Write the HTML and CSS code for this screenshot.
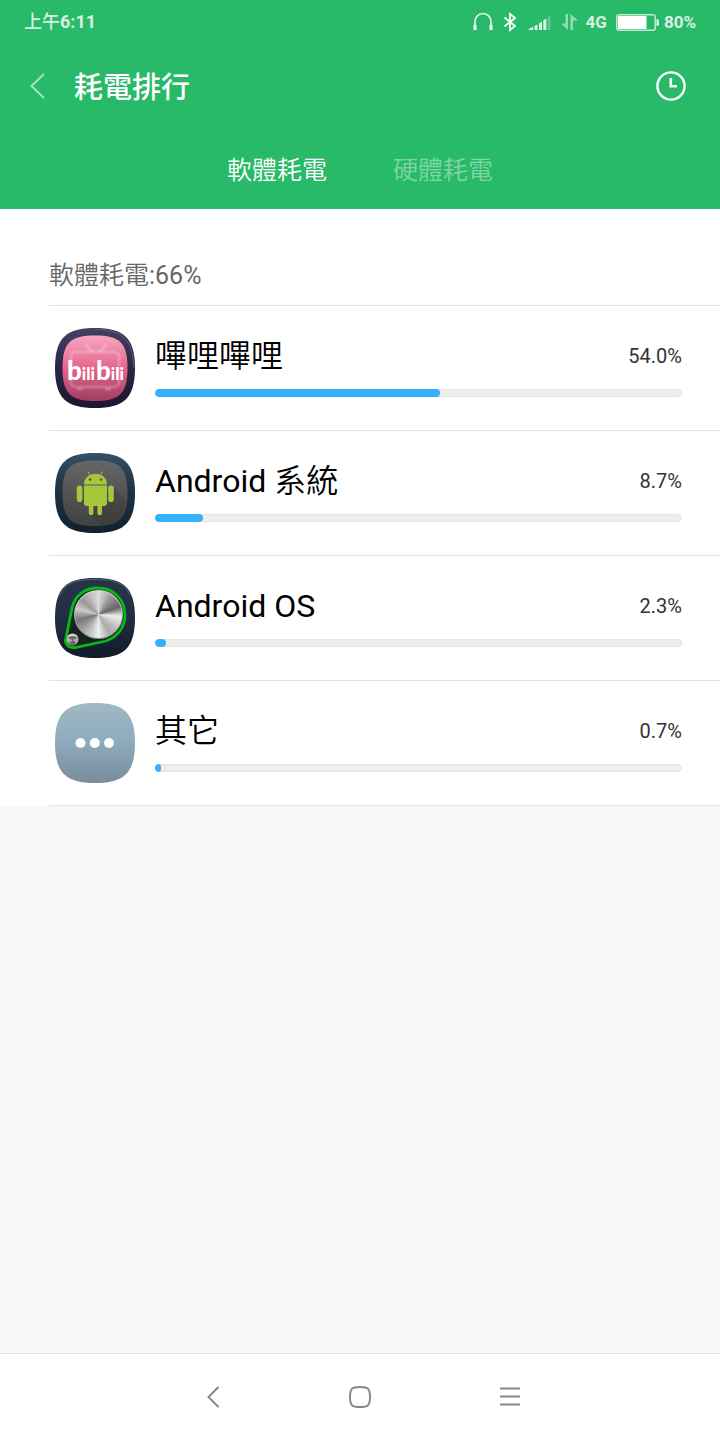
FILE: index.html
```html
<!DOCTYPE html>
<html lang="zh-Hant">
<head>
<meta charset="utf-8">
<meta name="viewport" content="width=device-width, initial-scale=1">
<title>耗電排行</title>
<link rel="stylesheet" href="styles.css">
</head>
<body>
<div class="screen">
  <header class="top">
    <div class="status">
      <span class="status-time"><span class="meridiem">上午</span>6:11</span>
      <div class="status-icons">
        <svg width="20" height="20" viewBox="0 0 20 20" fill="none" stroke="#fff" stroke-width="1.6" opacity=".9"><path d="M2 15V9.500a8 8 0 0 1 16 0V15"/><path d="M2 13v5M18 13v5" stroke-width="3.200"/></svg>
        <svg class="bluetooth" width="14" height="20" viewBox="0 0 14 20" fill="none" stroke="#fff" stroke-width="1.900" opacity=".95"><path d="M1.500 5.500 12 14l-5 4V2l5 4L1.500 14.500"/></svg>
        <svg class="signal" width="23" height="16" viewBox="0 0 23 16" fill="#fff"><g opacity=".85"><path d="M0 16 5 12.500V16zM6.500 12 9.500 10.500V16h-3zM11 9.500 14 7.500V16h-3zM15.300 6.500 18.300 4.500V16h-3z"/></g><path d="M19.500 3 22.500 1V16h-3z" opacity=".25"/></svg>
        <svg class="data" width="17" height="16" viewBox="0 0 17 16" fill="#fff" opacity=".5"><path d="M4.500 0h2.500v16L0 9.500h4.500zM12 16H9.500V0L17 6.500h-5z"/></svg>
        <span class="network">4G</span>
        <svg class="battery" width="43" height="17" viewBox="0 0 43 17"><rect x=".8" y=".8" width="38.400" height="15.400" rx="2" fill="none" stroke="#fff" stroke-width="1.500" opacity=".7"/><path d="M2 2h28.500v13H2z" fill="#fff"/><path d="M40.500 5h1l1.500 1.500v4L41.500 12h-1z" fill="#fff" opacity=".85"/></svg>
        <span>80%</span>
      </div>
    </div>
    <div class="title-bar">
      <button class="icon-button" aria-label="返回"><svg width="16" height="26" viewBox="0 0 16 26" fill="none" stroke="#fff" stroke-width="1.900" opacity=".6"><path d="M14 1 1.500 13 14 25"/></svg></button>
      <h1>耗電排行</h1>
      <button class="icon-button" aria-label="歷史記錄"><svg width="30" height="30" viewBox="0 0 30 30" fill="none" stroke="#fff" stroke-width="2.400"><circle cx="15" cy="15" r="13.600"/><path d="M14.800 7v8.300H21" stroke-width="2.600"/></svg></button>
    </div>
    <nav class="tabs">
      <button class="tab tab-active">軟體耗電</button>
      <button class="tab">硬體耗電</button>
    </nav>
  </header>

  <main class="content">
    <section class="panel">
      <h2><span class="cjk">軟體耗電</span>:66%</h2>
      <ul class="apps">
        <li class="app">
          <svg class="app-icon" viewBox="0 0 80 80" aria-hidden="true">
            <defs>
              <linearGradient id="frameA" x2="0" y2="1"><stop stop-color="#464160"/><stop offset=".5" stop-color="#2a2645"/><stop offset="1" stop-color="#1b1730"/></linearGradient>
              <linearGradient id="pink" x2="0" y2="1"><stop stop-color="#f8a6c0"/><stop offset=".5" stop-color="#e4668d"/><stop offset="1" stop-color="#a13c60"/></linearGradient>
            </defs>
            <path d="M40 0C68 0 80 9 80 40S68 80 40 80 0 71 0 40 12 0 40 0Z" fill="url(#frameA)"/>
            <path d="M40 1.500C66 1.500 78.500 11 78.500 40" fill="none" stroke="#5b5574" stroke-width="1"/>
            <path d="M40 7.500C64 7.500 72.500 14 72.500 40S64 73 40 73 7.500 66 7.500 40 16 7.500 40 7.500Z" fill="url(#pink)"/>
            <g fill="none" stroke="#fff" stroke-opacity=".18" stroke-width="3.500"><rect x="16" y="24" width="48" height="35" rx="5"/><path d="m30 16 8 8M52 16l-8 8M22 61h6M50 61h6"/></g>
            <g class="logo-text"><text x="12" y="52"><tspan class="logo-big">b</tspan><tspan class="logo-small">ili</tspan></text><text x="41" y="52"><tspan class="logo-big">b</tspan><tspan class="logo-small">ili</tspan></text></g>
          </svg>
          <div class="usage">
            <div class="usage-line"><label class="app-name cjk" for="use-bili">嗶哩嗶哩</label><span class="percent">54.0%</span></div>
            <progress id="use-bili" max="100" value="54"></progress>
          </div>
        </li>
        <li class="app">
          <svg class="app-icon" viewBox="0 0 80 80" aria-hidden="true">
            <defs>
              <linearGradient id="frameB" x2="0" y2="1"><stop stop-color="#365065"/><stop offset=".4" stop-color="#203647"/><stop offset="1" stop-color="#12202c"/></linearGradient>
              <linearGradient id="gray" x2="0" y2="1"><stop stop-color="#666"/><stop offset="1" stop-color="#414141"/></linearGradient>
            </defs>
            <path d="M40 0C68 0 80 9 80 40S68 80 40 80 0 71 0 40 12 0 40 0Z" fill="url(#frameB)"/>
            <path d="M40 7.500C64 7.500 72.500 14 72.500 40S64 73 40 73 7.500 66 7.500 40 16 7.500 40 7.500Z" fill="url(#gray)"/>
            <path d="M58 34 71 47C70 66 61 72 45 72L34 61Z" fill="#333" opacity=".3"/>
            <g fill="#a4c83a"><path d="M29 31.500C29 17 52 17 52 31.500ZM29 32.500H52V50a3 3 0 0 1-3 3h-2v7a2.300 2.300 0 0 1-4.600 0v-7h-4v7a2.300 2.300 0 0 1-4.600 0v-7H32a3 3 0 0 1-3-3Z"/><rect x="21.800" y="32.500" width="5.600" height="16.500" rx="2.800"/><rect x="53.200" y="32.500" width="5.600" height="16.500" rx="2.800"/><path d="m35.500 23-2.500-4.500M45 23l2.500-4.500" stroke="#a4c83a" stroke-width="1"/></g>
            <g fill="#525b2d"><circle cx="35" cy="26.500" r="1.300"/><circle cx="46" cy="26.500" r="1.300"/></g>
          </svg>
          <div class="usage">
            <div class="usage-line"><label class="app-name" for="use-system">Android <span class="cjk">系統</span></label><span class="percent">8.7%</span></div>
            <progress id="use-system" max="100" value="9.1"></progress>
          </div>
        </li>
        <li class="app">
          <svg class="app-icon" viewBox="0 0 80 80" aria-hidden="true">
            <defs>
              <linearGradient id="frameC" x2="0" y2="1"><stop stop-color="#263548"/><stop offset=".5" stop-color="#202f42"/><stop offset="1" stop-color="#111b29"/></linearGradient>
              <linearGradient id="rim" x2="0" y2="1"><stop stop-color="#ddd"/><stop offset="1" stop-color="#8c8c8c"/></linearGradient>
            </defs>
            <path d="M40 0C68 0 80 9 80 40S68 80 40 80 0 71 0 40 12 0 40 0Z" fill="url(#frameC)"/>
            <path d="M5 18C10 5 20 1.500 40 1.500S70 5 75 18" fill="none" stroke="#52606f" stroke-width="1"/>
            <path d="M17 30C20 17 30 10 43 10C59 10 70 22 70 37C70 50 62 59 51 63L20 69.500C13 70 9 65 11 60Z" fill="#14251f" stroke="#08b719" stroke-width="2.800"/>
            <circle cx="43.500" cy="36.500" r="24.500" fill="url(#rim)"/>
            <foreignObject x="20" y="13" width="47" height="47"><div xmlns="http://www.w3.org/1999/xhtml" class="dial"></div></foreignObject>
            <circle cx="17.500" cy="61.500" r="6" fill="url(#rim)"/><path d="M12.500 60q5-4 10 0l-5 2zM14 65q4 3 7 0l-3-3z" fill="#555" opacity=".8"/>
          </svg>
          <div class="usage">
            <div class="usage-line"><label class="app-name" for="use-os">Android OS</label><span class="percent">2.3%</span></div>
            <progress id="use-os" max="100" value="2.1"></progress>
          </div>
        </li>
        <li class="app">
          <svg class="app-icon" viewBox="0 0 80 80" aria-hidden="true">
            <defs><linearGradient id="blue" x2="0" y2="1"><stop stop-color="#a2b9c5"/><stop offset=".5" stop-color="#8daabd"/><stop offset="1" stop-color="#788d99"/></linearGradient></defs>
            <path d="M40 0C68 0 80 9 80 40S68 80 40 80 0 71 0 40 12 0 40 0Z" fill="url(#blue)"/>
            <g fill="#fff"><circle cx="25.500" cy="40" r="5"/><circle cx="39.800" cy="40" r="5"/><circle cx="54" cy="40" r="5"/></g>
          </svg>
          <div class="usage">
            <div class="usage-line"><label class="app-name cjk" for="use-other">其它</label><span class="percent">0.7%</span></div>
            <progress id="use-other" max="100" value="1.1"></progress>
          </div>
        </li>
      </ul>
    </section>
  </main>

  <footer class="navigation">
    <button class="nav-button" aria-label="返回"><svg width="24" height="24" viewBox="0 0 24 24"><path d="M20.500 2 10.500 12l10 10"/></svg></button>
    <button class="nav-button" aria-label="主畫面"><svg width="24" height="24" viewBox="0 0 24 24"><path d="M12 2C20 2 22 3.500 22 12S20 22 12 22 2 20.500 2 12 4 2 12 2Z"/></svg></button>
    <button class="nav-button" aria-label="選單"><svg width="24" height="24" viewBox="0 0 24 24"><path d="M2 3.500h20M2 11.500h20M2 19.500h20"/></svg></button>
  </footer>
</div>
</body>
</html>
```
FILE: styles.css
```css
* {
  box-sizing: border-box;
}

body {
  margin: 0;
  font-family: Roboto, "Noto Sans CJK TC", sans-serif;
  background: #f7f7f7;
}

button {
  display: flex;
  align-items: center;
  justify-content: center;
  padding: 0;
  border: 0;
  background: none;
  color: inherit;
  font: inherit;
}

svg {
  display: block;
  flex: none;
}

h1,
h2,
ul {
  margin: 0;
  padding: 0;
}

.screen {
  display: flex;
  flex-direction: column;
  min-height: 100vh;
}

.top {
  background: #28b969;
  color: #fff;
}

.status {
  display: flex;
  align-items: center;
  justify-content: space-between;
  height: 44px;
  padding: 0 24px;
  font-size: 18px;
  font-weight: 700;
  line-height: 24px;
}

.status-time,
.status-icons > span {
  opacity: 0.8;
}

.meridiem {
  font-weight: 500;
}

.status-icons {
  display: flex;
  align-items: center;
  font-size: 17px;
}

.bluetooth {
  margin-left: 10px;
}

.signal {
  margin-left: 11px;
}

.data {
  margin-left: 10px;
}

.network {
  margin-left: 8px;
}

.battery {
  margin: 0 5px 0 9px;
}

.title-bar {
  display: flex;
  align-items: center;
  height: 84px;
  padding: 0 34px 0 30px;
}

.title-bar h1 {
  flex: 1;
  margin-left: 28px;
  padding-top: 3px;
  font-size: 29px;
  font-weight: 500;
  line-height: 40px;
}

.tabs {
  display: flex;
  justify-content: center;
  gap: 66px;
  height: 81px;
  padding-bottom: 2px;
  font-size: 25px;
}

.tab {
  font-weight: 350;
  opacity: 0.4;
}

.tab-active {
  opacity: 1;
}

.content {
  flex: 1;
}

.panel {
  padding-left: 49px;
  background: #fff;
}

.panel h2 {
  padding: 51px 0 13px;
  border-bottom: 1px solid #e4e4e4;
  color: #666;
  font-size: 25px;
  font-weight: 400;
  line-height: 32px;
}

.panel .cjk {
  font-weight: 350;
}

.apps {
  list-style: none;
}

.app {
  display: flex;
  align-items: center;
  gap: 20px;
  padding: 22px 38px 22px 6px;
  border-bottom: 1px solid #e4e4e4;
}

.app-icon {
  width: 80px;
  height: 80px;
}

.logo-text {
  fill: #fff;
  font-family: Lato, sans-serif;
  font-weight: 900;
}

.logo-big {
  font-size: 26px;
}

.logo-small {
  font-size: 17px;
}

.dial {
  height: 47px;
  border-radius: 50%;
  background: conic-gradient(#ddd, #999 35deg, #666 70deg, #eee 95deg, #bbb 130deg, #aaa 150deg, #eee 180deg, #aaa 220deg, #777 255deg, #ccc 285deg, #999 310deg, #ddd 360deg);
}

.usage {
  flex: 1;
}

.usage-line {
  display: flex;
  align-items: center;
  justify-content: space-between;
  height: 34px;
}

.app-name {
  color: #000;
  font-size: 32px;
  font-weight: 400;
  line-height: 34px;
}

.percent {
  color: #333;
  font-size: 20px;
  line-height: 24px;
}

progress {
  display: block;
  width: 100%;
  height: 8px;
  margin-top: 16px;
  border: 0;
  border-radius: 4px;
  overflow: hidden;
  appearance: none;
}

progress::-webkit-progress-bar {
  border-radius: 4px;
  background: #eee;
  box-shadow: inset 0 0 0 1px #e5e5e5;
}

progress::-webkit-progress-value {
  border-radius: 4px;
  background: #34b0ff;
}

.navigation {
  display: flex;
  justify-content: center;
  height: 87px;
  border-top: 1px solid #e4e4e4;
  background: #fff;
}

.nav-button {
  width: 150px;
}

.nav-button path {
  fill: none;
  stroke: #888;
  stroke-width: 2;
}
```
